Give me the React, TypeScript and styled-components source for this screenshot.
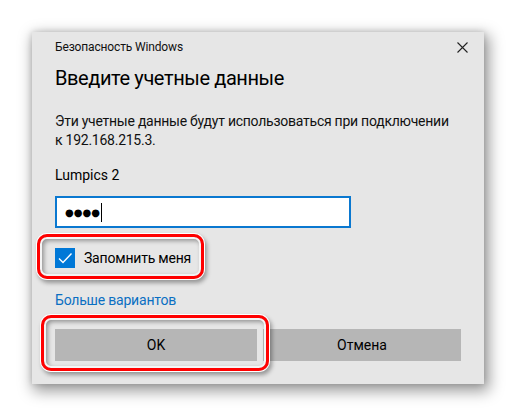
import React from "react";
import styled, { createGlobalStyle } from "styled-components";

const Global = createGlobalStyle`
  html, body { margin: 0; padding: 0; background: #ffffff; }
  body { font-family: Roboto, "Noto Sans", "DejaVu Sans", sans-serif; color: #000; }
`;

const Page = styled.div`
  width: 516px;
  height: 416px;
  padding: 32px 0 0 32px;
  box-sizing: border-box;
`;

const Dialog = styled.div`
  width: 452px;
  height: 352px;
  box-sizing: border-box;
  background: #e6e6e6;
  box-shadow: 3px 5px 14px 2px rgba(0, 0, 0, 0.4), 0 0 6px rgba(0, 0, 0, 0.15);
  padding: 0 23px;
  display: flex;
  flex-direction: column;
`;

const Header = styled.div`
  display: flex;
  justify-content: space-between;
  align-items: center;
  height: 30px;
`;

const AppName = styled.span`
  font-size: 12px;
  letter-spacing: -0.15px;
  color: #111;
`;

const Close = styled.svg`
  width: 11px;
  height: 11px;
  margin-right: -7px;
`;

const Title = styled.h1`
  margin: 2px 0 0;
  font-size: 20px;
  font-weight: 400;
  line-height: 28px;
  letter-spacing: -0.4px;
  color: #000;
`;

const Description = styled.p`
  margin: 20px 0 0;
  font-size: 14px;
  line-height: 19px;
  letter-spacing: -0.25px;
  white-space: nowrap;
  color: #111;
`;

const UserName = styled.div`
  margin-top: 15px;
  font-size: 14px;
  line-height: 20px;
`;

const PasswordBox = styled.div`
  margin-top: 11px;
  width: 296px;
  height: 32px;
  box-sizing: border-box;
  background: #ffffff;
  border: 2px solid #0a78d0;
  display: flex;
  align-items: center;
  padding-left: 8px;
`;

const Dots = styled.span`
  font-family: "DejaVu Sans", sans-serif;
  font-size: 10px;
  color: #000;
`;

const Caret = styled.span`
  display: inline-block;
  width: 1px;
  height: 19px;
  background: #000;
  margin-left: 1px;
`;

const Marked = styled.div<{ $top?: number }>`
  position: relative;
  align-self: flex-start;
  margin-top: ${(p) => p.$top ?? 0}px;
`;

const Highlight = styled.div<{ $t: number; $r: number; $b: number; $l: number }>`
  position: absolute;
  top: ${(p) => -p.$t}px;
  right: ${(p) => -p.$r}px;
  bottom: ${(p) => -p.$b}px;
  left: ${(p) => -p.$l}px;
  border: 3px solid #ff0000;
  border-radius: 10px;
  pointer-events: none;
  box-shadow: 0 0 0 1px #ffffff, 2px 3px 4px 1px rgba(0, 0, 0, 0.35),
    inset 0 0 0 2px #f4f4f4, inset 2px 2px 4px 2px rgba(0, 0, 0, 0.35);
`;

const CheckRow = styled.div`
  width: 133px;
  display: flex;
  align-items: center;
  gap: 9px;
  height: 20px;
  font-size: 14px;
  letter-spacing: -0.2px;
  white-space: nowrap;
`;

const CheckBox = styled.span`
  flex: none;
  width: 20px;
  height: 20px;
  background: #0078d7;
  display: flex;
  align-items: center;
  justify-content: center;
`;

const Link = styled.a`
  align-self: flex-start;
  margin-top: 22px;
  font-size: 14px;
  line-height: 20px;
  letter-spacing: -0.2px;
  color: #0a6fc2;
  text-decoration: none;
`;

const Buttons = styled.div`
  margin-top: 19px;
  display: grid;
  grid-template-columns: 202px 198px;
  column-gap: 6px;
`;

const Button = styled.button`
  display: block;
  height: 32px;
  width: 100%;
  border: none;
  background: #b6b6b6;
  font-family: inherit;
  font-size: 14px;
  color: #000;
  padding: 0;
`;

export default function App() {
  return (
    <>
      <Global />
      <Page>
        <Dialog>
          <Header>
            <AppName>Безопасность Windows</AppName>
            <Close viewBox="0 0 11 11">
              <path d="M0.5 0.5 L10.5 10.5 M10.5 0.5 L0.5 10.5" stroke="#222" strokeWidth="1.1" fill="none" />
            </Close>
          </Header>
          <Title>Введите учетные данные</Title>
          <Description>
            Эти учетные данные будут использоваться при подключении
            <br />к 192.168.215.3.
          </Description>
          <UserName>Lumpics 2</UserName>
          <PasswordBox>
            <Dots>●●●●</Dots>
            <Caret />
          </PasswordBox>
          <Marked $top={20}>
            <CheckRow>
              <CheckBox>
                <svg width="16" height="16" viewBox="0 0 16 16">
                  <path d="M2 8.5 L6 12.5 L14.5 3.5" stroke="#fff" strokeWidth="1.4" fill="none" />
                </svg>
              </CheckBox>
              Запомнить меня
            </CheckRow>
            <Highlight $t={14} $r={16} $b={11} $l={18} />
          </Marked>
          <Link href="#">Больше вариантов</Link>
          <Buttons>
            <Marked>
              <Button>OK</Button>
              <Highlight $t={14} $r={12} $b={10} $l={14} />
            </Marked>
            <Button>Отмена</Button>
          </Buttons>
        </Dialog>
      </Page>
    </>
  );
}
